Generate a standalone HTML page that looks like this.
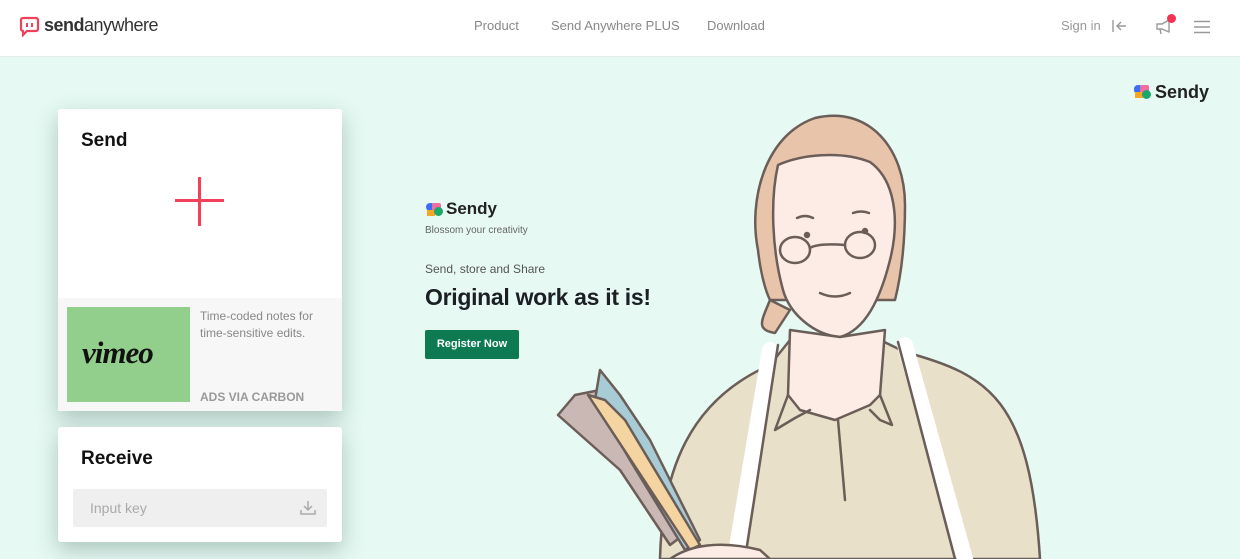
<!DOCTYPE html>
<html><head><meta charset="utf-8"><style>
*{margin:0;padding:0;box-sizing:border-box}
body{width:1240px;height:559px;overflow:hidden;background:#e6f9f3;font-family:"Liberation Sans",sans-serif;position:relative}
.hdr{position:absolute;left:0;top:0;width:1240px;height:57px;background:#fff;border-bottom:1px solid #e3ece9}
.nav{position:absolute;top:18px;font-size:13px;color:#888}
.card{position:absolute;background:#fff;border-radius:3px;box-shadow:0 8px 22px rgba(60,100,90,.35)}
.t{position:absolute;left:23px;font-size:19px;font-weight:bold;color:#111}
</style></head><body>
<div class="hdr">
<svg style="position:absolute;left:19px;top:15px" width="21" height="22" viewBox="0 0 21 22"><path d="M4 3h13a2 2 0 0 1 2 2v9a2 2 0 0 1-2 2H8l-4 4v-4a2 2 0 0 1-2-2V5a2 2 0 0 1 2-2z" fill="none" stroke="#f0405a" stroke-width="2.2"/><rect x="7" y="8" width="2" height="4" fill="#f0405a"/><rect x="12" y="8" width="2" height="4" fill="#f0405a"/></svg>
<div style="position:absolute;left:44px;top:15px;font-size:18px;color:#333;letter-spacing:-0.5px"><span style="font-weight:bold">send</span>anywhere</div>
<div class="nav" style="left:474px">Product</div>
<div class="nav" style="left:551px">Send Anywhere PLUS</div>
<div class="nav" style="left:707px">Download</div>
<div class="nav" style="left:1061px;color:#999">Sign in</div>
<svg style="position:absolute;left:1112px;top:19px" width="16" height="14"><path d="M1 1v12M14 7H5M9 3L5 7l4 4" stroke="#999" stroke-width="1.4" fill="none"/></svg>
<svg style="position:absolute;left:1155px;top:18px" width="20" height="18"><path d="M2 6h5l7-4v12l-7-3H2z M5 11l1 5" stroke="#999" stroke-width="1.4" fill="none"/></svg>
<div style="position:absolute;left:1167px;top:14px;width:9px;height:9px;border-radius:50%;background:#f5324f"></div>
<svg style="position:absolute;left:1194px;top:20px" width="16" height="14"><path d="M0 1.5h16M0 7h16M0 12.5h16" stroke="#999" stroke-width="1.5"/></svg>
</div>
<div style="position:absolute;left:1134px;top:84px;width:18px;height:16px">
<div style="position:absolute;left:0;top:1px;width:9px;height:9px;background:#3b6ef5;border-radius:4px"></div>
<div style="position:absolute;left:6px;top:1px;width:9px;height:9px;background:#f26da0;border-radius:2px"></div>
<div style="position:absolute;left:1px;top:8px;width:8px;height:6px;background:#f5a623"></div>
<div style="position:absolute;left:8px;top:6px;width:9px;height:9px;background:#1aa76b;border-radius:50%"></div></div>
<div style="position:absolute;left:1155px;top:82px;font-size:18px;font-weight:bold;color:#222">Sendy</div>

<div class="card" style="left:58px;top:109px;width:284px;height:302px">
<div class="t" style="top:21px">Send</div>
<div style="position:absolute;left:117px;top:90px;width:49px;height:3px;background:#f0405a"></div>
<div style="position:absolute;left:140px;top:68px;width:3px;height:49px;background:#f0405a"></div>
<div style="position:absolute;left:0;top:189px;width:284px;height:113px;background:#f7f7f7">
<div style="position:absolute;left:9px;top:9px;width:123px;height:95px;background:#93cf8c"><div style="position:absolute;left:15px;top:28px;font-family:'Liberation Serif',serif;font-style:italic;font-weight:bold;font-size:31px;color:#111;letter-spacing:-1px">vimeo</div></div>
<div style="position:absolute;left:142px;top:10px;font-size:12px;color:#888;line-height:17px">Time-coded notes for<br>time-sensitive edits.</div>
<div style="position:absolute;left:142px;top:92px;font-size:12px;font-weight:bold;color:#999">ADS VIA CARBON</div>
</div></div>

<div class="card" style="left:58px;top:427px;width:284px;height:115px">
<div class="t" style="top:21px">Receive</div>
<div style="position:absolute;left:15px;top:62px;width:254px;height:38px;background:#efefef;border-radius:2px">
<div style="position:absolute;left:17px;top:11px;font-size:14px;color:#aaa">Input key</div>
<svg style="position:absolute;left:227px;top:11px" width="16" height="16"><path d="M8 1v9M4 6l4 4 4-4M1 10v4h14v-4" stroke="#aaa" stroke-width="1.5" fill="none"/></svg></div></div>

<div style="position:absolute;left:426px;top:202px;width:18px;height:16px">
<div style="position:absolute;left:0;top:1px;width:9px;height:8px;background:#3b6ef5;border-radius:4px"></div>
<div style="position:absolute;left:6px;top:1px;width:9px;height:8px;background:#f26da0;border-radius:2px"></div>
<div style="position:absolute;left:1px;top:8px;width:8px;height:6px;background:#f5a623"></div>
<div style="position:absolute;left:8px;top:5px;width:9px;height:9px;background:#1aa76b;border-radius:50%"></div></div>
<div style="position:absolute;left:446px;top:199px;font-size:17px;font-weight:bold;color:#222">Sendy</div>
<div style="position:absolute;left:425px;top:225px;font-size:10px;color:#666">Blossom your creativity</div>
<div style="position:absolute;left:425px;top:262px;font-size:12px;color:#555">Send, store and Share</div>
<div style="position:absolute;left:425px;top:284px;font-size:23px;font-weight:bold;color:#1c1f24;letter-spacing:-0.3px">Original work as it is!</div>
<div style="position:absolute;left:425px;top:330px;width:94px;height:29px;background:#0e7a52;border-radius:2px;color:#fff;font-size:11px;font-weight:bold;text-align:center;line-height:29px">Register Now</div>

<svg style="position:absolute;left:0;top:0" width="1240" height="559" viewBox="0 0 1240 559" fill="none" stroke="#6b5d58" stroke-width="2.5" stroke-linejoin="round" stroke-linecap="round">
<path d="M660 559C662 470 690 400 770 365L790 340 880 340 905 352C990 375 1030 400 1040 559Z" fill="#e8e0c8"/>
<path d="M770 350L735 559M905 345L965 559" stroke="#fff" stroke-width="16"/>
<path d="M778 345L745 559M898 342L955 559"/>
<path d="M758 250C748 200 765 135 815 118C870 105 905 150 905 205C905 250 900 280 895 300L770 300C765 290 760 270 758 250Z" fill="#e8c4ab"/>
<path d="M770 300C762 320 755 330 775 333L790 310Z" fill="#e8c4ab"/>
<path d="M778 165C800 155 840 150 870 162C895 180 900 220 890 260C880 300 865 330 840 337C815 335 790 315 783 290C772 250 770 200 778 165Z" fill="#fcece5"/>
<path d="M790 330L788 395 800 410 835 420 870 405 880 395 885 330 840 337Z" fill="#fcece5"/>
<path d="M788 395L775 430 795 418 810 410M880 395L892 425 880 420 870 410M838 420L845 500" />
<path d="M780 250a15 13 0 1 0 30 0a15 13 0 1 0-30 0M845 245a15 13 0 1 0 30 0a15 13 0 1 0-30 0M810 248q8-5 35-3"/>
<circle cx="807" cy="235" r="2" fill="#6b5d58"/><circle cx="865" cy="231" r="2" fill="#6b5d58"/>
<path d="M820 293q15 7 30 0M797 218q8-4 16 0M853 213q8-3 16 0"/>
<path d="M558 415L575 395 600 390 660 470 690 530 670 545 620 470Z" fill="#c9b8b4"/>
<path d="M600 370L620 395 650 440 700 540 685 550 630 460 595 400Z" fill="#a8ccd6"/>
<path d="M588 395L605 400 625 420 700 545 690 550Z" fill="#f4d4a0"/>
<path d="M670 559C690 545 720 540 760 550L770 559Z" fill="#fcece5"/>
</svg>
</body></html>
